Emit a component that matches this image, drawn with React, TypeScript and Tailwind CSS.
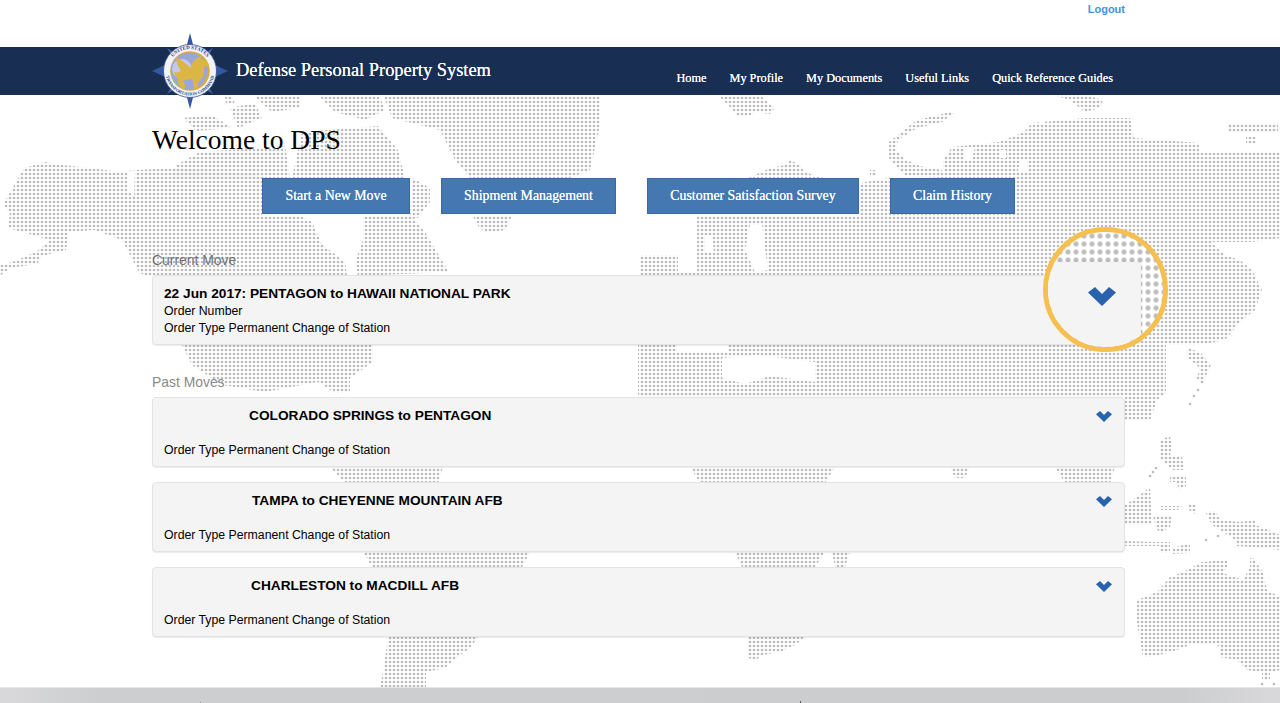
import React from "react";

const land: string[] = [
  // Alaska, Canada, USA
  "16,182 24,168 45,162 62,165 90,168 120,172 135,170 175,168 262,175 262,216 300,216 312,222 322,244 345,262 347,276 147,277 139,272 122,240 94,230 69,232 66,250 42,256 37,264 10,268 0,276 0,265 12,262 36,252 50,240 8,228 10,214 3,204 8,196",
  "363,216 412,216 425,232 449,272 358,276 355,262 363,240",
  "412,178 430,188 430,202 418,218 410,218",
  // Arctic Canada
  "230,108 255,103 262,118 238,128",
  "225,97 232,97 235,104 226,103",
  "255,97 300,97 300,108 272,112",
  "320,97 380,97 385,110 365,120 335,112",
  "183,118 212,115 232,128 196,131",
  "302,132 378,126 398,150 405,178 292,178",
  "200,152 285,146 290,178 170,178 176,165",
  // Greenland
  "384,97 600,97 600,125 590,170 570,178 470,178 455,160 440,130 392,118",
  "473,216 512,216 505,230 486,233 478,226",
  // Mexico / central
  "182,345 373,345 373,362 350,378 350,393 335,393 318,382 265,392 222,385 192,365",
  "330,467 443,467 438,483 345,483",
  // South America
  "363,552 530,552 522,567 372,567",
  "388,637 478,637 470,648 460,655 452,662 445,668 426,672 426,687 380,687 383,672",
  // Iceland, Svalbard
  "720,97 762,97 775,108 770,114 755,112 748,117 738,117 730,107",
  "1053,95 1085,95 1103,100 1100,108 1085,112 1070,100",
  // Scandinavia arc
  "954,113 942,122 917,128 898,140 896,150 906,160 920,166 942,170 944,178 905,176 889,158 889,142 917,120 950,112",
  "748,178 770,168 785,165 790,160 800,165 805,172 823,178",
  "870,170 876,170 876,176 870,176",
  "860,183 889,178 889,217 860,217",
  // Eurasia north
  "952,147 999,142 1024,132 1032,123 1085,118 1130,118 1134,138 1199,143 1199,153 1244,152 1280,152 1280,238 1252,242 1211,242 1225,255 1240,260 1252,270 1262,290 1255,310 1240,322 1225,340 1200,345 1166,345 1125,345 1125,276 640,276 640,255 678,255 678,272 697,272 697,216 889,216 889,178 943,178 943,160",
  // Asia / Africa below the current-move card
  "638,345 1166,345 1166,393 1157,400 1150,420 1125,420 1125,397 638,397",
  "1187,348 1200,352 1211,365 1203,382 1196,380 1200,368 1188,358",
  "1228,123 1278,123 1278,132 1228,132",
  "1246,137 1256,137 1256,144 1246,144",
  // Africa and Asia between cards
  "690,467 835,467 825,483 700,483",
  "950,467 970,467 965,478 955,478",
  "1055,467 1115,467 1110,483 1065,483",
  "735,552 825,552 815,567 742,567",
  "832,552 850,552 845,567 835,567",
  "748,637 805,637 795,645 780,652 762,655 756,660 748,658",
  // Islands
  "1160,440 1170,436 1172,445 1170,455 1182,457 1184,470 1172,470 1160,458",
  "1170,477 1186,475 1186,486 1180,490 1176,482 1170,482",
  "1125,505 1140,495 1150,487 1152,525 1125,525",
  "1153,515 1172,515 1170,527 1160,533 1156,528",
  "1125,541 1155,542 1170,542 1170,546 1125,546",
  "1161,506 1182,506 1178,510 1161,510",
  "1188,504 1197,503 1196,514 1190,512",
  "1205,511 1216,511 1220,520 1240,522 1255,520 1255,525 1262,527 1280,535 1280,550 1265,548 1235,546 1235,540 1225,533 1212,525",
  "1160,545 1170,545 1170,553 1160,553",
  "1173,548 1190,543 1190,553 1172,554",
  // Australia
  "1137,600 1157,592 1170,577 1183,572 1202,562 1227,560 1227,567 1223,573 1243,580 1250,567 1250,558 1253,558 1263,572 1267,590 1280,597 1280,670 1267,673 1247,670 1237,660 1220,657 1220,647 1213,643 1190,645 1177,650 1153,657 1143,657 1140,640 1137,623",
  "1262,673 1270,673 1270,680 1262,680",
];

const cuts: string[] = [
  "128,172 135,170 134,196 127,190",
  "750,225 762,225 768,270 755,272 745,250",
  "705,235 712,235 714,252 705,252",
  "677,345 728,345 728,352 677,352",
  "722,358 760,355 815,362 815,382 770,376 745,384 722,378",
  "1040,118 1045,118 1045,125 1040,125",
  "965,147 975,147 972,160 964,160",
  "1000,150 1006,150 1006,158 1000,158",
  "1020,160 1027,160 1027,172 1018,172",
];

const Chevron = ({ className }: { className: string }) => (
  <svg viewBox="0 0 28 19" className={className} fill="#2a63ad">
    <polygon points="0,5.5 7,0 14,7 21,0 28,5.5 14,19" />
  </svg>
);

const WorldMap = () => (
  <svg className="absolute left-0 top-0" width="1280" height="703" aria-hidden="true">
    <defs>
      <pattern id="dots" patternUnits="userSpaceOnUse" width="4" height="4">
        <circle cx="2" cy="2" r="1.35" fill="#bcbcbc" />
      </pattern>
    </defs>
    <g fill="url(#dots)">
      {land.map((p, i) => (
        <polygon key={i} points={p} />
      ))}
    </g>
    <g fill="#ffffff">
      {cuts.map((p, i) => (
        <polygon key={i} points={p} />
      ))}
    </g>
    <g fill="#bcbcbc">
      {[
        [1202, 382],
        [1198, 390],
        [1194, 396],
        [1190, 404],
        [1153, 472],
        [1150, 476],
        [1156, 468],
        [1206, 540],
        [1218, 536],
        [1262, 684],
        [1274, 684],
      ].map(([x, y], i) => (
        <circle key={i} cx={x} cy={y} r="1.35" />
      ))}
    </g>
  </svg>
);

const Logo = () => (
  <svg viewBox="0 0 76 78" className="absolute left-[152px] top-[32px] h-[78px] w-[76px]" role="img" aria-label="Seal">
    <polygon points="38,1 44,24 76,39 44,54 38,77 32,54 0,39 32,24" fill="#34589f" />
    <polygon points="15,16 38,30 61,16 47,39 61,62 38,48 15,62 29,39" fill="#4564a8" />
    <circle cx="38" cy="39" r="26.5" fill="#f3f3f7" stroke="#34508f" strokeWidth="0.8" />
    <circle cx="38" cy="39" r="19.8" fill="#d4ac3e" />
    <circle cx="37" cy="39" r="18.3" fill="#9aa6d8" />
    <circle cx="30" cy="37" r="10" fill="#c4c9ea" />
    <path
      d="M24 25 C30 28 35 32 38 36 C40 30 44 26 49 24 C48 27 50 28 53 29 L57 33 L52 35 C53 41 51 47 46 50 C47 53 46 56 43 57.5 C41 54 40 50 41 47 C37 48 33 47 31 49 C33 51 34 54 32 57 C27 55 25 50 26 46 C24 45 22 42 22 40 C25 41 27 40 29 39 C26 35 24 30 24 25 Z"
      fill="#dcb645"
    />
    <path id="sealTop" d="M16 39 A22 22 0 0 1 60 39" fill="none" />
    <path id="sealBottom" d="M13.5 39 A24.5 24.5 0 0 0 62.5 39" fill="none" />
    <text fontFamily="'Liberation Serif', serif" fontSize="5" fill="#26407c" fontWeight="bold">
      <textPath href="#sealTop" startOffset="50%" textAnchor="middle">UNITED STATES</textPath>
    </text>
    <text fontFamily="'Liberation Serif', serif" fontSize="4.4" fill="#26407c" fontWeight="bold">
      <textPath href="#sealBottom" startOffset="50%" textAnchor="middle">TRANSPORTATION COMMAND</textPath>
    </text>
  </svg>
);

const moves = [
  { title: "COLORADO SPRINGS to PENTAGON", pad: "pl-[85px]" },
  { title: "TAMPA to CHEYENNE MOUNTAIN AFB", pad: "pl-[88px]" },
  { title: "CHARLESTON to MACDILL AFB", pad: "pl-[87px]" },
];

const sans = "font-['Liberation_Sans',Arial,sans-serif]";
const serif = "font-['Liberation_Serif','Times_New_Roman',serif]";

export default function App() {
  return (
    <div className={`relative flex h-[703px] w-[1280px] flex-col overflow-hidden bg-white ${sans}`}>
      <WorldMap />

      <div className="relative flex h-[47px] justify-end pr-[155px] pt-[2px]">
        <a className="text-[11px] font-bold leading-[14px] text-[#4a90d9]">Logout</a>
      </div>

      <header className={`relative flex h-[48px] items-start justify-end gap-[23px] bg-[#182e52] pr-[167px] pt-[23px] text-[12.3px] leading-[16px] text-white [text-shadow:0_0_0.6px_#fff] ${serif}`}>
        <span className="absolute left-[236px] top-[11px] text-[18.4px] leading-[24px]">Defense Personal Property System</span>
        <span>Home</span>
        <span>My Profile</span>
        <span>My Documents</span>
        <span>Useful Links</span>
        <span>Quick Reference Guides</span>
      </header>
      <Logo />

      <main className="relative ml-[152px] flex w-[973px] flex-col">
        <h1 className={`mt-[29px] text-[27.5px] leading-[32px] text-black ${serif}`}>Welcome to DPS</h1>
        <div className={`ml-[110px] mt-[22px] flex gap-[31px] text-[13.85px] text-white [text-shadow:0_0_0.6px_#fff] ${serif}`}>
          {[
            ["Start a New Move", "w-[148px]"],
            ["Shipment Management", "w-[175px]"],
            ["Customer Satisfaction Survey", "w-[212px]"],
            ["Claim History", "w-[125px]"],
          ].map(([t, w]) => (
            <div key={t} className={`flex h-[36px] items-center justify-center border border-[#3a6aa3] bg-[#4577b1] ${w}`}>
              {t}
            </div>
          ))}
        </div>

        <div className="mt-[38px] text-[13.9px] font-light leading-[16px] text-[#707070]">Current Move</div>
        <section className="mt-[7px] h-[70px] rounded-[4px] border border-[#e3e3e3] bg-[#f4f4f4] px-[11px] pt-[9px] text-[12.28px] leading-[17px] text-black shadow-[0_1px_1px_rgba(0,0,0,0.08)]">
          <div className="text-[13.7px] font-bold leading-[17px]">22 Jun 2017: PENTAGON to HAWAII NATIONAL PARK</div>
          <div className="mt-[1px]">Order Number</div>
          <div>Order Type Permanent Change of Station</div>
        </section>

        <div className="mt-[29px] text-[13.9px] font-light leading-[16px] text-[#8a8a8a]">Past Moves</div>
        <div className="mt-[7px] flex flex-col gap-[15px]">
          {moves.map((m) => (
            <section key={m.title} className="relative h-[70px] rounded-[4px] border border-[#e3e3e3] bg-[#f4f4f4] px-[11px] pt-[9px] text-[12.28px] leading-[17px] text-black shadow-[0_1px_1px_rgba(0,0,0,0.08)]">
              <div className={`text-[13.7px] font-bold leading-[17px] ${m.pad}`}>{m.title}</div>
              <div className="mt-[18px]">Order Type Permanent Change of Station</div>
              <Chevron className="absolute right-[12px] top-[13px] h-[11px] w-[16px]" />
            </section>
          ))}
        </div>
      </main>

      <footer className="relative mt-auto h-[16px] border-t border-[#e6e6e6] bg-[linear-gradient(90deg,#d9d9db_0%,#cdced0_8%,#cccdcf_92%,#d9d9db_100%)]">
        <span className="absolute bottom-0 left-[800px] h-[2px] w-[1px] bg-[#555]" />
        <span className="absolute bottom-0 left-[200px] h-[1px] w-[1px] bg-[#888]" />
      </footer>

      {/* Magnified callout */}
      <div className="absolute left-[1043px] top-[227px] h-[125px] w-[125px] overflow-hidden rounded-full border-[5px] border-[#f5c04f] bg-white bg-[radial-gradient(circle,#bdbdbd_1.6px,transparent_3.4px)] bg-[length:8px_8px]">
        <div className="absolute -left-[20px] top-[30px] h-[120px] w-[113px] rounded-[4px] bg-[#f4f4f4] shadow-[0_0_2px_rgba(0,0,0,0.15)]" />
        <Chevron className="absolute left-[40px] top-[55px] h-[19px] w-[28px]" />
      </div>
    </div>
  );
}
